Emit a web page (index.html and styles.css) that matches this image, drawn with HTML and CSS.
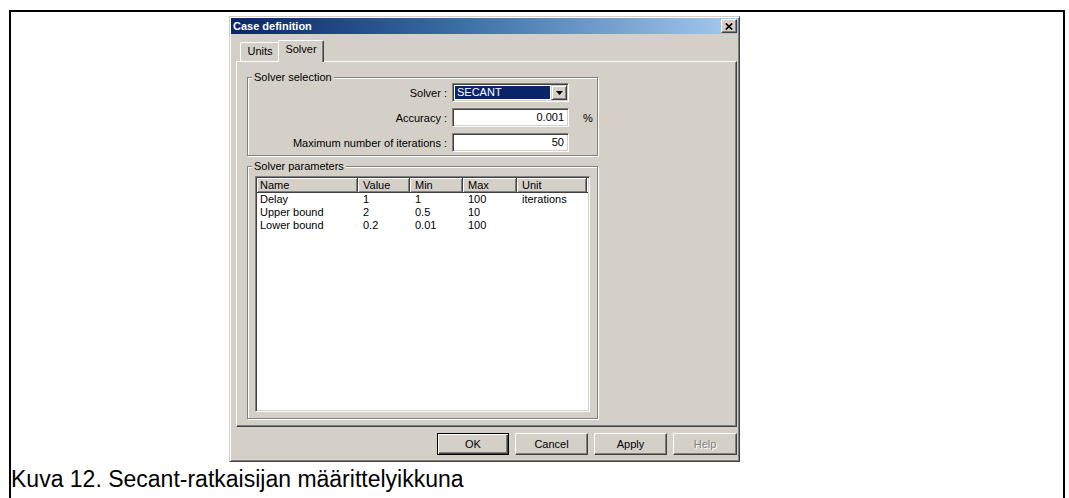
FILE: index.html
```html
<!DOCTYPE html>
<html lang="fi">
<head>
<meta charset="utf-8">
<title>Kuva 12</title>
<link rel="stylesheet" href="styles.css">
</head>
<body>
<div class="frame">
  <div class="dialog">
    <div class="titlebar">
      <span class="title">Case definition</span>
      <span class="close">
        <svg width="8" height="7" viewBox="0 0 8 7"><path d="M0.8 0.5 L7.2 6.5 M7.2 0.5 L0.8 6.5" stroke="#000" stroke-width="1.7" fill="none"/></svg>
      </span>
    </div>

    <div class="tabs">
      <div class="tab">Units</div>
      <div class="tab active">Solver</div>
    </div>

    <div class="panel">
      <fieldset class="group">
        <legend>Solver selection</legend>
        <div class="form">
          <label>Solver :</label>
          <div class="combo">
            <span class="combo-value">SECANT</span>
            <span class="combo-btn">
              <svg width="7" height="4" viewBox="0 0 7 4"><polygon points="0,0 7,0 3.5,4" fill="#000"/></svg>
            </span>
          </div>
          <span></span>

          <label>Accuracy :</label>
          <div class="field">0.001</div>
          <span class="unit">%</span>

          <label>Maximum number of iterations :</label>
          <div class="field">50</div>
          <span></span>
        </div>
      </fieldset>

      <fieldset class="group params">
        <legend>Solver parameters</legend>
        <div class="listview">
          <table>
            <colgroup>
              <col class="c-name"><col class="c-value"><col class="c-min"><col class="c-max"><col class="c-unit"><col>
            </colgroup>
            <thead>
              <tr><th>Name</th><th>Value</th><th>Min</th><th>Max</th><th>Unit</th><th class="filler"></th></tr>
            </thead>
            <tbody>
              <tr><td>Delay</td><td>1</td><td>1</td><td>100</td><td>iterations</td><td></td></tr>
              <tr><td>Upper bound</td><td>2</td><td>0.5</td><td>10</td><td></td><td></td></tr>
              <tr><td>Lower bound</td><td>0.2</td><td>0.01</td><td>100</td><td></td><td></td></tr>
            </tbody>
          </table>
        </div>
      </fieldset>
    </div>

    <div class="buttons">
      <button class="btn default">OK</button>
      <button class="btn">Cancel</button>
      <button class="btn">Apply</button>
      <button class="btn disabled">Help</button>
    </div>
  </div>

  <p class="caption">Kuva 12. Secant-ratkaisijan määrittelyikkuna</p>
</div>
</body>
</html>
```

FILE: styles.css
```css
* { box-sizing: border-box; }

html, body {
  margin: 0;
  padding: 0;
  background: #fff;
  overflow: hidden;
}

body {
  font-family: "Liberation Sans", Arial, sans-serif;
  color: #000;
}

/* figure frame, open at the bottom */
.frame {
  margin: 10px 0 0 9px;
  width: 1056px;
  height: 600px;
  border: 2px solid #000;
  border-bottom: none;
}

/* classic dialog window */
.dialog {
  margin: 4px 0 0 218px;
  width: 511px;
  height: 446px;
  padding: 1px;
  background: #d4d0c8;
  border: 1px solid;
  border-color: #d4d0c8 #404040 #404040 #d4d0c8;
  box-shadow: inset 1px 1px 0 #fff, inset -1px -1px 0 #808080;
  font-size: 11px;
}

.titlebar {
  height: 16px;
  display: flex;
  align-items: center;
  justify-content: space-between;
  padding: 0 1px 0 2px;
  background: linear-gradient(to right, #0a246a 0%, #3a6ea5 45%, #a6caf0 100%);
}

.title {
  color: #fff;
  font-weight: bold;
}

.close {
  width: 16px;
  height: 14px;
  display: flex;
  align-items: center;
  justify-content: center;
  background: #d4d0c8;
  border: 1px solid;
  border-color: #fff #404040 #404040 #fff;
  box-shadow: inset -1px -1px 0 #808080;
}

/* tab strip */
.tabs {
  display: flex;
  align-items: flex-end;
  height: 21px;
  margin: 6px 0 0 9px;
}

.tab {
  width: 40px;
  height: 19px;
  line-height: 16px;
  text-align: center;
  background: #d4d0c8;
  border-top: 1px solid #fff;
  border-left: 1px solid #fff;
  border-right: 1px solid #404040;
  box-shadow: inset -1px 0 0 #808080;
  border-radius: 2px 2px 0 0;
}

.tab.active {
  position: relative;
  z-index: 1;
  width: 46px;
  height: 22px;
  line-height: 17px;
  margin-left: -2px;
  margin-bottom: -1px;
}

.panel {
  margin-left: 5px;
  width: 501px;
  height: 366px;
  padding: 9px 0 0 10px;
  border: 1px solid;
  border-color: #fff #404040 #404040 #fff;
  box-shadow: inset -1px -1px 0 #808080;
}

/* etched group boxes */
.group {
  margin: 0;
  padding: 0 0 3px 0;
  width: 351px;
  min-inline-size: 0;
  border: 1px solid #808080;
  box-shadow: inset 1px 1px 0 #fff, 1px 1px 0 #fff;
}

.group legend {
  margin-left: 4px;
  padding: 0 2px;
  line-height: 12px;
  background: #d4d0c8;
}

.group.params {
  margin-top: 4px;
  padding: 0;
}

.form {
  display: grid;
  grid-template-columns: 199px 117px auto;
  column-gap: 5px;
  row-gap: 6px;
  align-items: center;
}

.form label {
  text-align: right;
  white-space: nowrap;
}

.combo,
.field {
  height: 19px;
  padding: 1px;
  border: 1px solid;
  border-color: #808080 #fff #fff #808080;
  box-shadow: inset 1px 1px 0 #404040, inset -1px -1px 0 #d4d0c8;
  background: #fff;
}

.combo {
  display: flex;
}

.combo-value {
  flex: 1;
  margin: 1px;
  padding-left: 2px;
  line-height: 13px;
  background: #0a246a;
  color: #fff;
}

.combo-btn {
  width: 16px;
  height: 15px;
  display: flex;
  align-items: center;
  justify-content: center;
  background: #d4d0c8;
  border: 1px solid;
  border-color: #d4d0c8 #404040 #404040 #d4d0c8;
  box-shadow: inset 1px 1px 0 #fff, inset -1px -1px 0 #808080;
}

.field {
  text-align: right;
  padding-right: 4px;
  line-height: 15px;
}

.unit {
  margin-left: 9px;
}

/* list view */
.listview {
  margin: 4px 0 6px 7px;
  width: 335px;
  height: 236px;
  padding: 1px;
  background: #fff;
  border: 1px solid;
  border-color: #808080 #fff #fff #808080;
  box-shadow: inset 1px 1px 0 #404040, inset -1px -1px 0 #d4d0c8;
}

.listview table {
  width: 100%;
  table-layout: fixed;
  border-collapse: separate;
  border-spacing: 0;
  font-size: 11px;
}

.c-name { width: 101px; }
.c-value { width: 52px; }
.c-min { width: 53px; }
.c-max { width: 54px; }
.c-unit { width: 70px; }

.listview th {
  height: 15px;
  padding: 0 0 0 5px;
  font-weight: normal;
  text-align: left;
  background: #d4d0c8;
  border-right: 1px solid #404040;
  border-bottom: 1px solid #404040;
  box-shadow: inset 1px 1px 0 #fff, inset -1px -1px 0 #808080;
  white-space: nowrap;
}

.listview th:first-child {
  padding-left: 3px;
}

.listview th.filler {
  border-right: none;
}

.listview td {
  height: 13px;
  line-height: 13px;
  padding: 0 0 0 5px;
  white-space: nowrap;
}

.listview td:first-child {
  padding-left: 3px;
}

/* command buttons */
.buttons {
  display: flex;
  justify-content: flex-end;
  gap: 6px;
  margin-top: 6px;
  padding-right: 1px;
}

.btn {
  width: 73px;
  height: 22px;
  padding: 0;
  font: inherit;
  color: #000;
  background: #d4d0c8;
  border: 1px solid;
  border-color: #fff #404040 #404040 #fff;
  box-shadow: inset -1px -1px 0 #808080;
}

.btn.default {
  width: 72px;
  border: 1px solid #000;
  box-shadow: inset 1px 1px 0 #fff, inset -1px -1px 0 #404040, inset -2px -2px 0 #808080;
}

.btn.disabled {
  width: 64px;
  color: #808080;
  text-shadow: 1px 1px 0 #fff;
}

.caption {
  margin: 4px 0 0 0;
  font-size: 23px;
  line-height: normal;
}
```
